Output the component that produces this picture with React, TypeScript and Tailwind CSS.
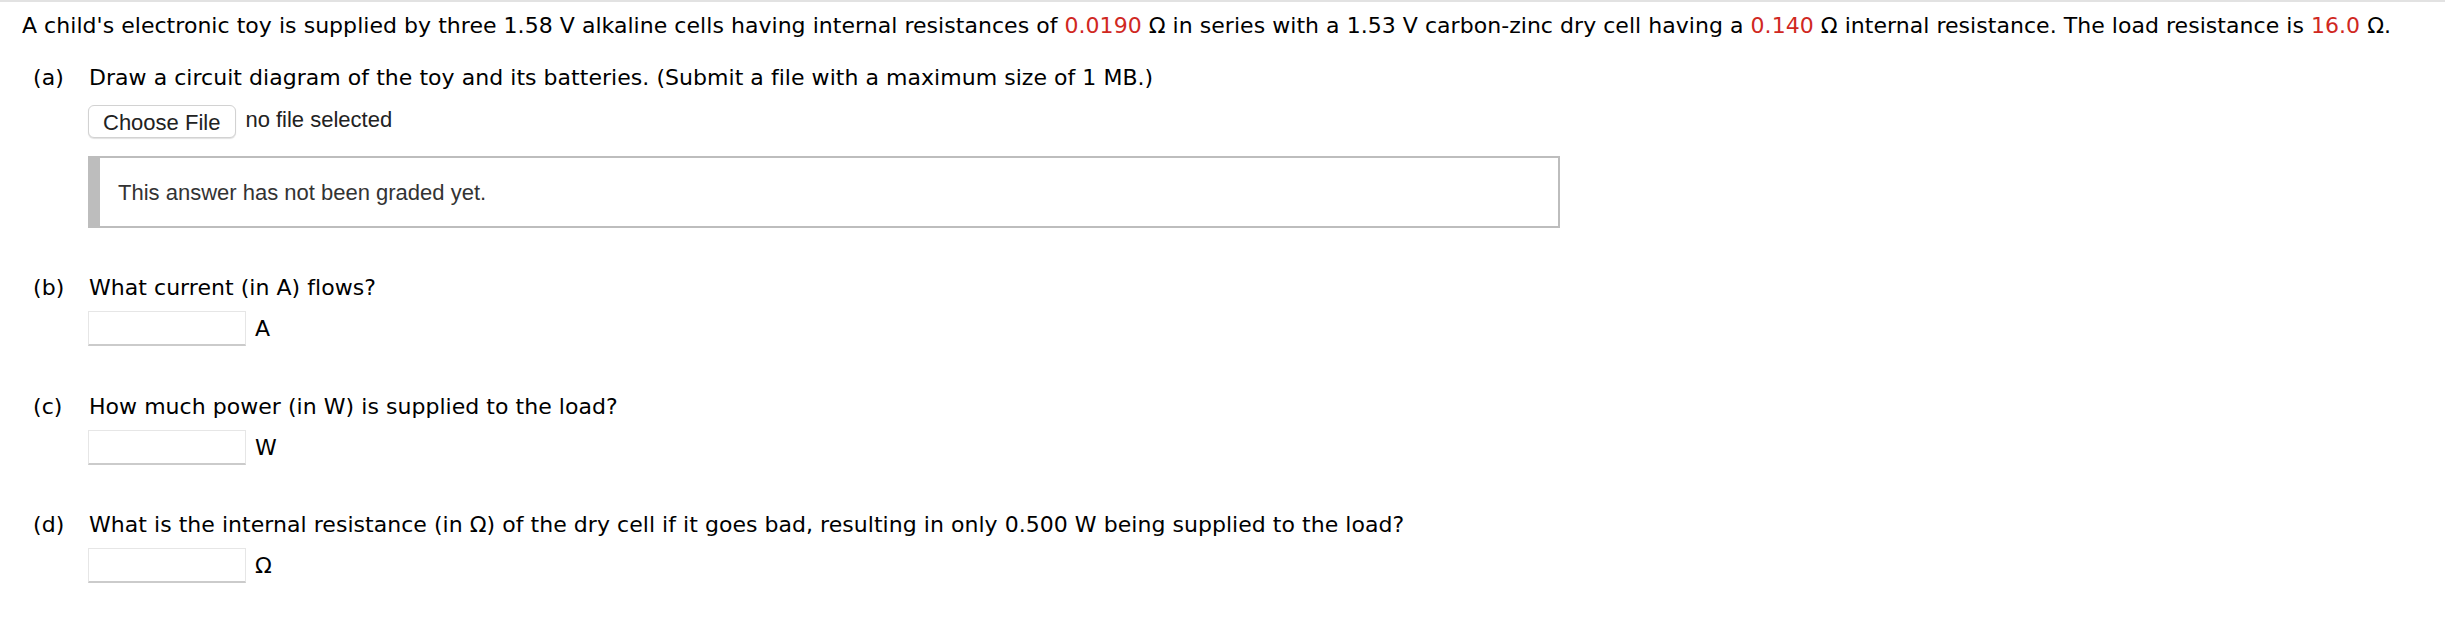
import type { ReactNode } from "react";

const verdana = "font-['DejaVu_Sans',Verdana,sans-serif]";
const arial = "font-['Liberation_Sans',Arial,sans-serif]";

function Red({ children }: { children: ReactNode }) {
  return <span className="text-[#d0281f]">{children}</span>;
}

function Part({ label, question, children }: { label: string; question: ReactNode; children: ReactNode }) {
  return (
    <div className="ml-[11px]">
      <div className="flex leading-[33px]">
        <span className="w-[56px] shrink-0">({label})</span>
        <span>{question}</span>
      </div>
      <div className="ml-[55px]">{children}</div>
    </div>
  );
}

function AnswerInput({ unit }: { unit: string }) {
  return (
    <div className="mt-[7px] flex items-center">
      <input
        type="text"
        className="h-[35px] w-[158px] border border-[#e6e6e6] border-b-2 border-b-[#cbcbcb] bg-white outline-none"
      />
      <span className="ml-[9px] leading-[33px]">{unit}</span>
    </div>
  );
}

export default function App() {
  return (
    <div className={`bg-white border-t-2 border-[#e2e2e2] text-[22px] text-black ${verdana}`}>
      <div className="pl-[22px] pt-[7px] tracking-[0.04px]">
        <p className="whitespace-nowrap leading-[33px]">
          A child's electronic toy is supplied by three 1.58 V alkaline cells having internal resistances of <Red>0.0190</Red> Ω in
          series with a 1.53 V carbon-zinc dry cell having a <Red>0.140</Red> Ω internal resistance. The load resistance is{" "}
          <Red>16.0</Red> Ω.
        </p>

        <div className="mt-[19px]">
          <Part label="a" question="Draw a circuit diagram of the toy and its batteries. (Submit a file with a maximum size of 1 MB.)">
            <div className={`mt-[11px] flex items-start tracking-normal ${arial}`}>
              <button className="h-[33px] rounded-[6px] border border-[#d2d2d2] bg-white pl-[14px] pr-[15px] text-[22px] text-[#222] shadow-[0_1px_1px_rgba(0,0,0,0.12)]">
                Choose File
              </button>
              <span className="ml-[9px] mt-[4px] text-[22px] leading-[22px] text-[#222]">no file selected</span>
            </div>
            <div className="mt-[18px] flex h-[72px] w-[1472px] items-center border-2 border-l-[12px] border-[#bdbdbd] bg-white">
              <span className={`pl-[18px] text-[22px] tracking-normal text-[#333] ${arial}`}>This answer has not been graded yet.</span>
            </div>
          </Part>
        </div>

        <div className="mt-[43px]">
          <Part label="b" question="What current (in A) flows?">
            <AnswerInput unit="A" />
          </Part>
        </div>

        <div className="mt-[44px]">
          <Part label="c" question="How much power (in W) is supplied to the load?">
            <AnswerInput unit="W" />
          </Part>
        </div>

        <div className="mt-[43px]">
          <Part
            label="d"
            question="What is the internal resistance (in Ω) of the dry cell if it goes bad, resulting in only 0.500 W being supplied to the load?"
          >
            <AnswerInput unit="Ω" />
          </Part>
        </div>
      </div>
    </div>
  );
}
